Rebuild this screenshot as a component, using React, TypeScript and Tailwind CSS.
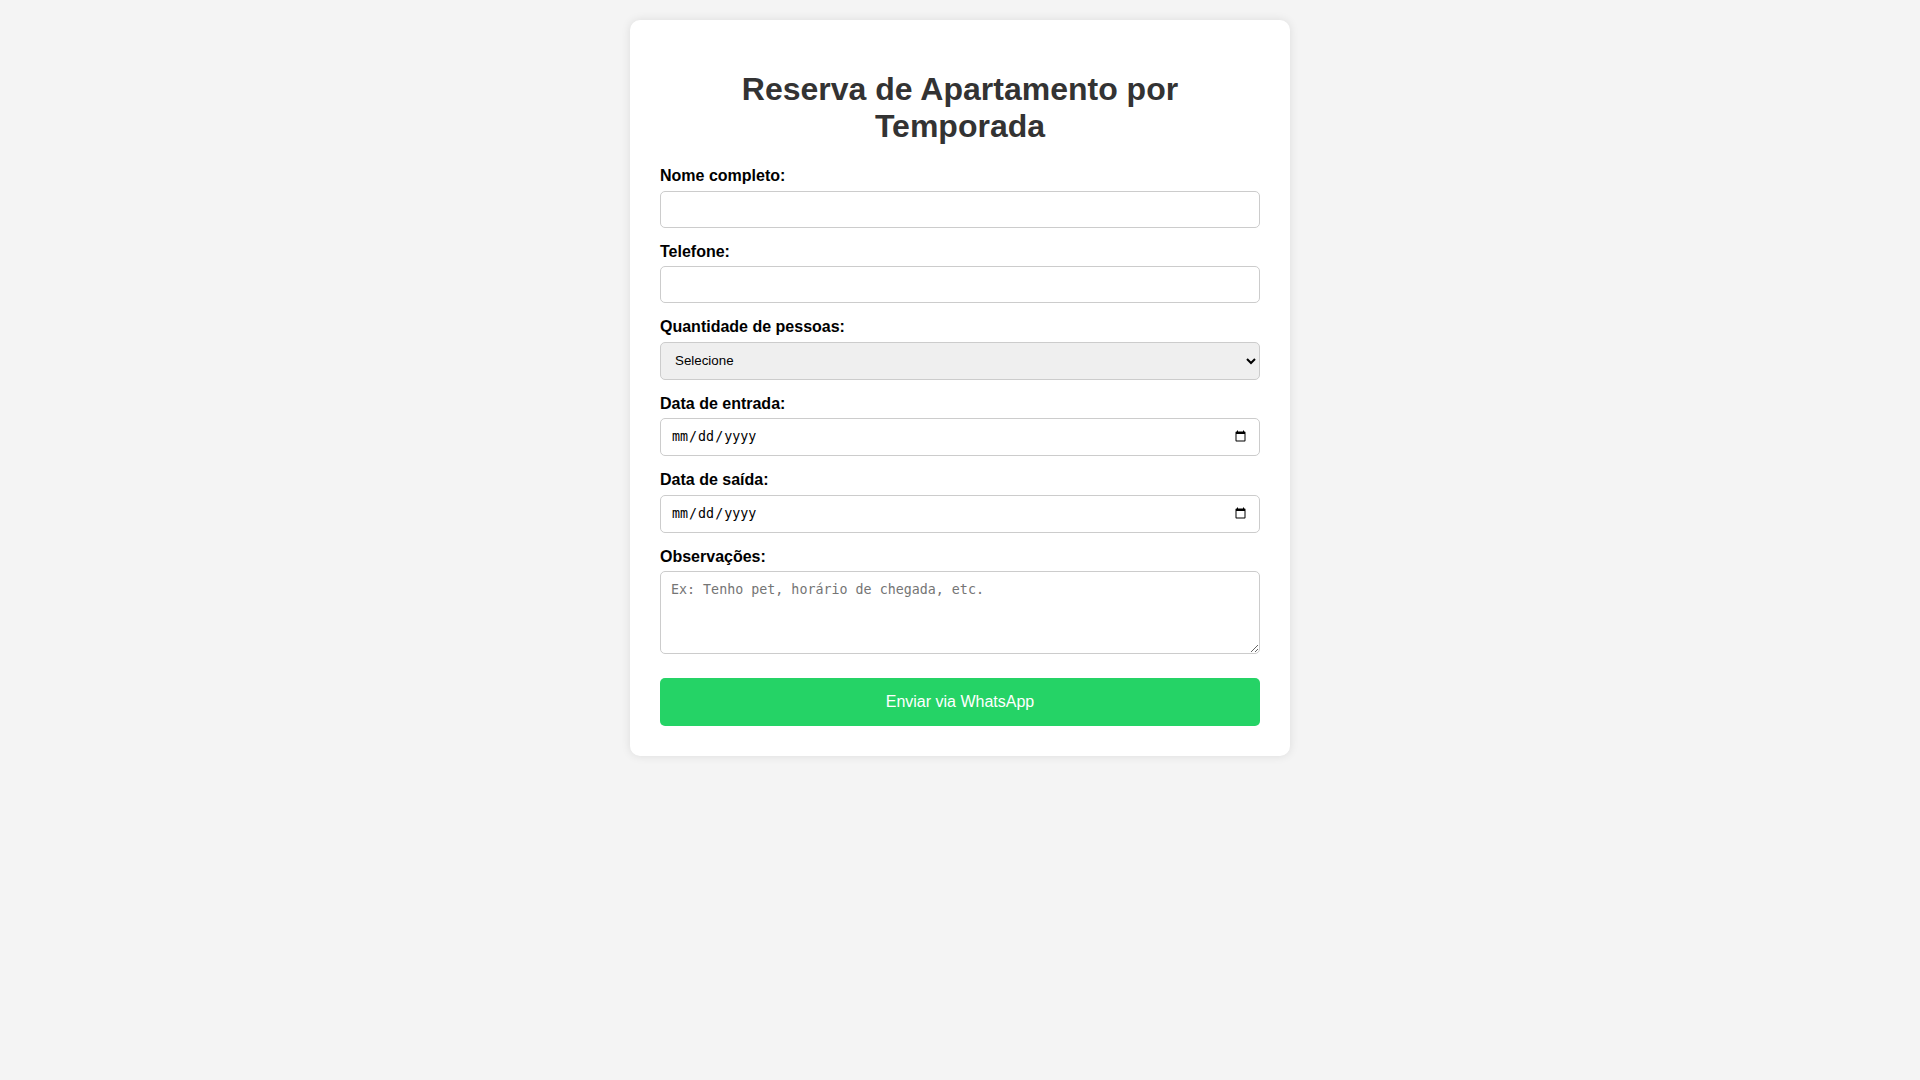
import { useState } from "react";

const fieldBase =
  "mt-[5px] block w-full rounded-[5px] border border-[#ccc] px-[10px] text-[13.333px] text-black outline-none";

export default function App() {
  const [form, setForm] = useState({
    nome: "",
    telefone: "",
    pessoas: "",
    entrada: "",
    saida: "",
    obs: "",
  });

  const set = (key: keyof typeof form) => (e: { target: { value: string } }) =>
    setForm({ ...form, [key]: e.target.value });

  const handleSubmit = (e: React.FormEvent) => {
    e.preventDefault();
    const msg = `Olá! Gostaria de reservar o apartamento.%0ANome: ${form.nome}%0ATelefone: ${form.telefone}%0APessoas: ${form.pessoas}%0AEntrada: ${form.entrada}%0ASaída: ${form.saida}%0AObs: ${form.obs}`;
    window.open(`https://wa.me/?text=${msg}`, "_blank");
  };

  return (
    <div className="min-h-screen bg-[#f4f4f4] pt-[20px] font-['Liberation_Sans',Arial,sans-serif]">
      <div className="mx-auto w-[660px] rounded-[10px] bg-white p-[30px] shadow-[0_0_10px_rgba(0,0,0,0.1)]">
        <h1 className="mt-[21px] mb-[22px] text-center text-[32px] font-bold leading-[37px] text-[#333]">
          Reserva de Apartamento por Temporada
        </h1>

        <form onSubmit={handleSubmit}>
          <label className="block text-[16px] font-bold leading-[18.5px] text-black">Nome completo:</label>
          <input type="text" value={form.nome} onChange={set("nome")} className={`${fieldBase} h-[37px]`} />

          <label className="mt-[15px] block text-[16px] font-bold leading-[18.5px] text-black">Telefone:</label>
          <input type="tel" value={form.telefone} onChange={set("telefone")} className={`${fieldBase} h-[37px]`} />

          <label className="mt-[15px] block text-[16px] font-bold leading-[18.5px] text-black">
            Quantidade de pessoas:
          </label>
          <select
            value={form.pessoas}
            onChange={set("pessoas")}
            className={`${fieldBase} h-[38px] appearance-auto bg-[#efefef] px-[8px]`}
          >
            <option value="">Selecione</option>
            <option value="1">1</option>
            <option value="2">2</option>
            <option value="3">3</option>
            <option value="4">4</option>
            <option value="5">5 ou mais</option>
          </select>

          <label className="mt-[15px] block text-[16px] font-bold leading-[18.5px] text-black">Data de entrada:</label>
          <input
            type="date"
            value={form.entrada}
            onChange={set("entrada")}
            className={`${fieldBase} h-[38px] font-['DejaVu_Sans_Mono',monospace]`}
          />

          <label className="mt-[15px] block text-[16px] font-bold leading-[18.5px] text-black">Data de saída:</label>
          <input
            type="date"
            value={form.saida}
            onChange={set("saida")}
            className={`${fieldBase} h-[38px] font-['DejaVu_Sans_Mono',monospace]`}
          />

          <label className="mt-[15px] block text-[16px] font-bold leading-[18.5px] text-black">Observações:</label>
          <textarea
            value={form.obs}
            onChange={set("obs")}
            placeholder="Ex: Tenho pet, horário de chegada, etc."
            className={`${fieldBase} h-[83px] resize-y py-[10px] font-['DejaVu_Sans_Mono',monospace] leading-[15px] placeholder:text-[#757575]`}
          />

          <button
            type="submit"
            className="mt-[24px] block h-[48px] w-full cursor-pointer rounded-[5px] bg-[#25d366] text-[16px] text-white"
          >
            Enviar via WhatsApp
          </button>
        </form>
      </div>
    </div>
  );
}
